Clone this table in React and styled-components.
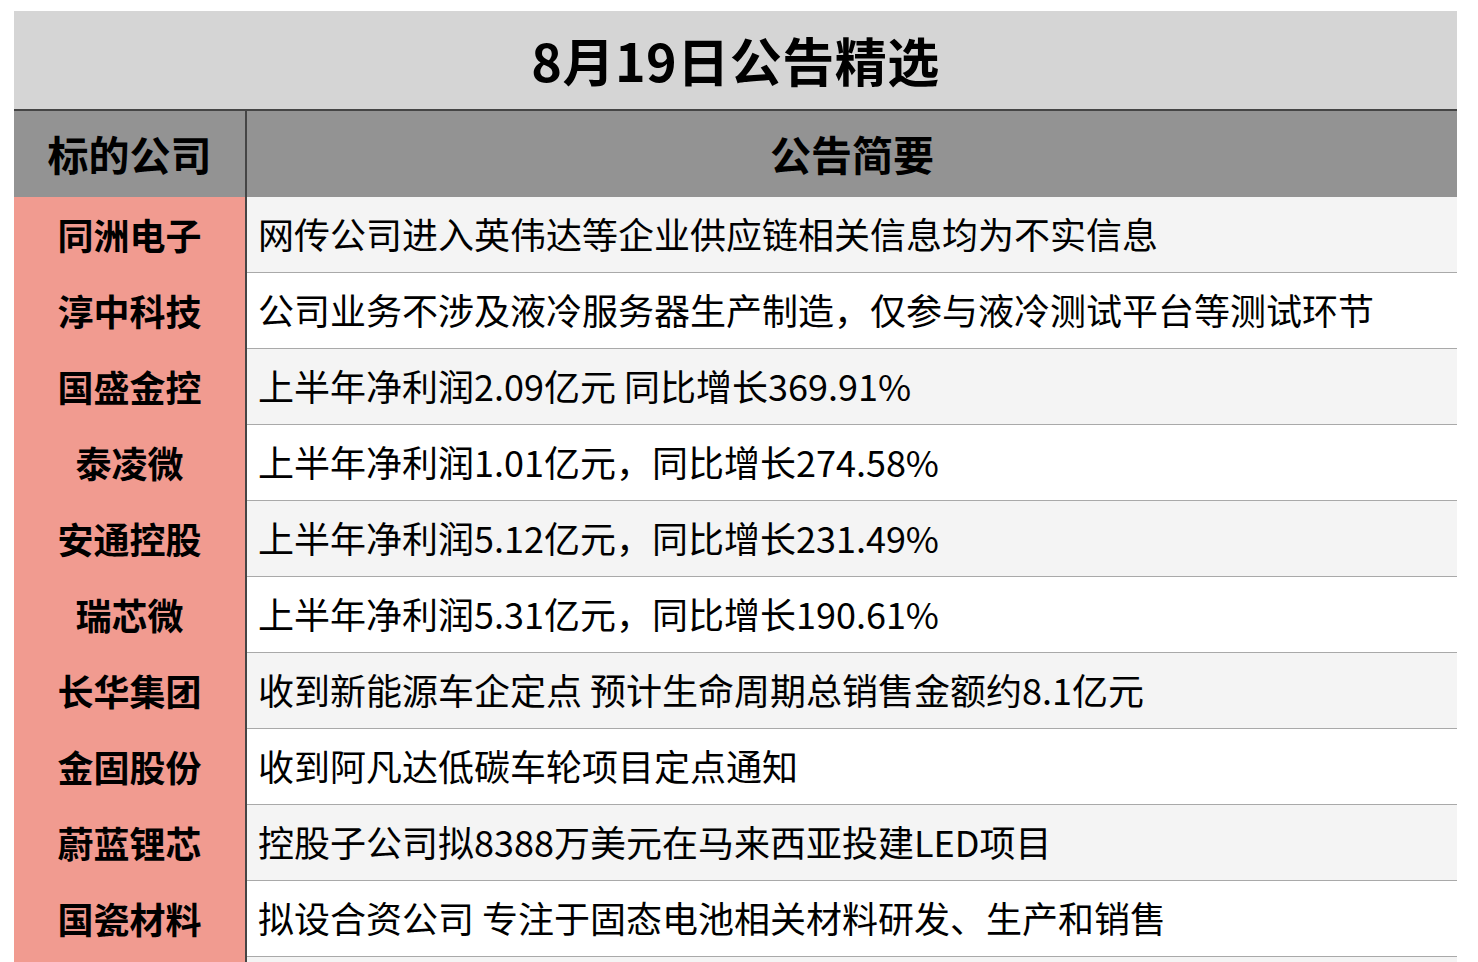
import styled, { createGlobalStyle } from "styled-components";

const GlobalStyle = createGlobalStyle`
    html, body {
        margin: 0;
        padding: 0;
        background: #ffffff;
    }
    body {
        font-family: "Noto Sans CJK SC", "Noto Sans", sans-serif;
        color: #000;
    }
`

const rows = [
    { name: "同洲电子", text: "网传公司进入英伟达等企业供应链相关信息均为不实信息" },
    { name: "淳中科技", text: "公司业务不涉及液冷服务器生产制造，仅参与液冷测试平台等测试环节" },
    { name: "国盛金控", text: "上半年净利润2.09亿元 同比增长369.91%" },
    { name: "泰凌微", text: "上半年净利润1.01亿元，同比增长274.58%" },
    { name: "安通控股", text: "上半年净利润5.12亿元，同比增长231.49%" },
    { name: "瑞芯微", text: "上半年净利润5.31亿元，同比增长190.61%" },
    { name: "长华集团", text: "收到新能源车企定点 预计生命周期总销售金额约8.1亿元" },
    { name: "金固股份", text: "收到阿凡达低碳车轮项目定点通知" },
    { name: "蔚蓝锂芯", text: "控股子公司拟8388万美元在马来西亚投建LED项目" },
    { name: "国瓷材料", text: "拟设合资公司 专注于固态电池相关材料研发、生产和销售" },
    { name: "", text: "" },
]

const Page = styled.div`
    padding: 11px 21px 0 14px;
`

const Table = styled.div`
    width: 1443px;
    display: flex;
    flex-direction: column;
`

const Title = styled.div`
    height: 96px;
    padding-bottom: 2px;
    background: #d5d5d5;
    border-bottom: 2px solid #454545;
    display: flex;
    align-items: center;
    justify-content: center;
    font-size: 52px;
    font-weight: 700;
    letter-spacing: 0.5px;
`

const Row = styled.div`
    display: grid;
    grid-template-columns: 233px 1fr;
    height: ${p => p.$head ? "86px" : "75px"};
    border-bottom: ${p => p.$head ? "none" : "1px solid #a9a9a9"};
    background: ${p => p.$head ? "#939393" : p.$alt ? "#f4f4f4" : "#ffffff"};
`

const NameCell = styled.div`
    display: flex;
    align-items: center;
    justify-content: center;
    padding-bottom: 3px;
    border-right: 2px solid #454545;
    background: ${p => p.$head ? "#939393" : "#f19b90"};
    font-size: ${p => p.$head ? "41px" : "36px"};
    font-weight: 700;
    margin-bottom: ${p => p.$head ? "0" : "-1px"};
`

const TextCell = styled.div`
    display: flex;
    align-items: center;
    justify-content: ${p => p.$head ? "center" : "flex-start"};
    padding-left: ${p => p.$head ? "0" : "11px"};
    padding-bottom: 3px;
    font-size: ${p => p.$head ? "41px" : "36px"};
    font-weight: ${p => p.$head ? 700 : 400};
    white-space: nowrap;
`

const App = () => {
    return (
        <Page>
            <GlobalStyle />
            <Table>
                <Title>8月19日公告精选</Title>
                <Row $head>
                    <NameCell $head>标的公司</NameCell>
                    <TextCell $head>公告简要</TextCell>
                </Row>
                {rows.map((r, i) => (
                    <Row key={i} $alt={i % 2 === 0}>
                        <NameCell>{r.name}</NameCell>
                        <TextCell>{r.text}</TextCell>
                    </Row>
                ))}
            </Table>
        </Page>
    )
}

export default App
